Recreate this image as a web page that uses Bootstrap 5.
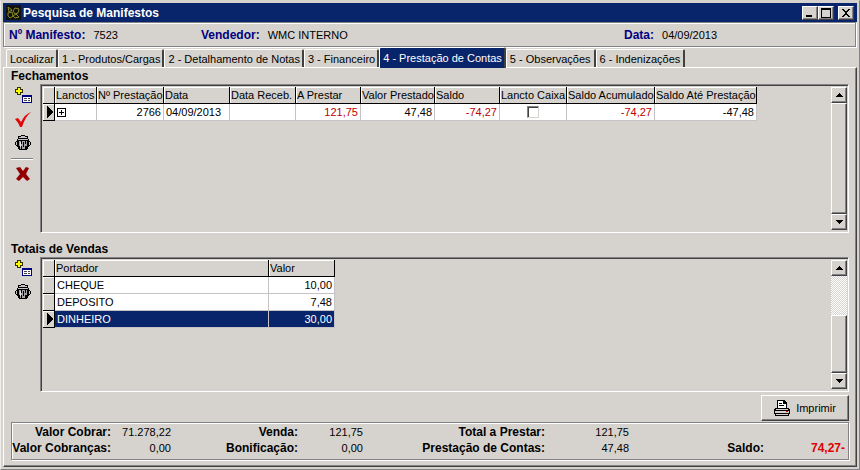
<!DOCTYPE html>
<html lang="pt-BR">
<head>
<meta charset="utf-8">
<meta name="viewport" content="width=device-width, initial-scale=1">
<title>Pesquisa de Manifestos</title>
<link href="https://cdn.jsdelivr.net/npm/bootstrap@5.3.0/dist/css/bootstrap.min.css" rel="stylesheet">
<style>
:root{--face:#d6d3ce;--navy:#08246b;--shade:#848284;--dark:#424142}
body{background:var(--face);color:#000;font:11px/16px "Liberation Sans",Arial,sans-serif}
b,h1,h2{font:bold 12px/16px "Liberation Sans",Arial,sans-serif;margin:0}
button{font:inherit;color:inherit;background:var(--face);border:0;padding:0}
svg{display:block;shape-rendering:crispEdges}
svg.smooth{shape-rendering:auto}
.window-frame{min-height:100vh;padding:2px;border:1px solid;border-color:var(--face) var(--shade) var(--shade) #efeeec}
.caption-bar{background:var(--navy);color:#fff;height:19px;padding:0 3px}
.caption-bar h1{padding-left:2px}
.sys-btn{width:16px;height:14px;color:#000;display:grid;place-items:center}
.groove{border:1px solid var(--shade);box-shadow:inset 1px 1px #fff,1px 1px #fff}
.info-line{display:grid;grid-template-columns:192px 423px 1fr;height:25px;margin-right:1px;padding-left:5px;align-items:center}
.info-line b{margin-right:8px;color:#000080}
.tab-strip{padding:2px 0 0 3px;height:20px}
.tab-btn{border-left:1px solid #fff;border-top:1px solid #fff;border-right:2px solid var(--dark);border-radius:2px 2px 0 0;height:18px;line-height:18px;padding:0 2px 0 3px;white-space:nowrap}
.tab-btn.active{background:var(--navy);color:#fff;height:21px;margin-top:-2px;z-index:1;position:relative}
.tab-btn.active~.tab-btn{padding-right:3px}
.tab-page{border:1px solid;border-color:#fff var(--dark) var(--dark) #fff;box-shadow:inset -1px -1px var(--shade);padding:0 7px 6px 7px}
.tool-col{width:29px;flex:none;padding:2px 5px 0 0}
.tool-col button{display:block;width:18px;height:18px;margin:0 0 6px 3px}
.tool-col hr{margin:0 0 5px;width:22px;height:2px;border:0;opacity:1;background:linear-gradient(var(--shade) 50%,#fff 50%)}
.sunken{border:1px solid;border-color:var(--shade) #fff #fff var(--shade);box-shadow:inset 1px 1px var(--dark);padding:2px 1px 2px 2px}
.pane-a{height:149px}.pane-b{height:135px}
.grid-table{table-layout:fixed;border-collapse:separate;border-spacing:0;width:0}
.grid-table th,.grid-table td{height:17px;line-height:16px;padding:0 2px;white-space:nowrap;font-weight:400}
.grid-table th{background:var(--face);padding:0 1px;border-right:1px solid #000;border-bottom:1px solid #000;box-shadow:inset 1px 1px #fff}
.grid-table td{background:#fff;border-right:1px solid #c6c3c6;border-bottom:1px solid #c6c3c6}
.grid-table td:first-child{background:var(--face);border-color:#000;padding:0;box-shadow:inset 1px 1px #fff}
.grid-table .picked td:not(:first-child){background:var(--navy);color:#fff}
.neg{color:#c00000}
.tick{appearance:none;width:12px;height:12px;margin:0;display:block;background:#fff;border:1px solid;border-color:var(--shade) #d6d3ce #d6d3ce var(--shade);box-shadow:inset 1px 1px var(--dark)}
.scroll-bar{width:16px;flex:none;background:repeating-conic-gradient(#fff 0 25%,var(--face) 0 50%) 0 0/2px 2px}
.scroll-thumb{height:58px}
.raised{background:var(--face);border:1px solid;border-color:#fff var(--dark) var(--dark) #fff;box-shadow:inset -1px -1px var(--shade)}
.scroll-bar button{width:16px;height:16px;display:grid;place-items:center}
.action-row{padding-top:3px}
.print-btn{width:88px;height:26px;gap:6px}
.sum-grid{display:grid;grid-template-columns:99px 60px 127px 65px 182px 84px 1fr 81px;text-align:right;white-space:nowrap;padding:1px 3px 3px 0;margin-top:1px}
.total{color:#e00000}
</style>
<script src="https://cdn.jsdelivr.net/npm/bootstrap@5.3.0/dist/js/bootstrap.bundle.min.js"></script>
</head>
<body>
<svg width="0" height="0" class="position-absolute" aria-hidden="true">
<symbol id="ic-new" viewBox="0 0 18 18"><path fill="#31310a" d="M3 1h4v2h2v4H7v2H3V7H1V3h2z"/><path fill="#ff0" d="M4 2h2v2h2v2H6v2H4V6H2V4h2z"/><path fill="#000080" d="M8 9h10v8H8z"/><path fill="#fff" d="M9 11h8v5H9z"/><path fill="#444" d="M10 12h3v1h-3zM14 12h2v1h-2zM10 14h3v1h-3zM14 14h2v1h-2z"/></symbol>
<symbol id="ic-bin" viewBox="0 0 18 18"><path d="M7 1h4v1h3v3h1v2h1v1h1v3h-1v1h-1v1h-1v2h-1v1H5v-1H4v-2H3v-1H2v-1H1V8h1V7h1V5h1V2h3z"/><path fill="#c6c3c6" d="M7 2h4v1H7zM5 3h8v1H5zM4 5h10v1H4zM2 8h1v3H2zM15 8h1v3h-1z"/><path fill="#a5a2a5" d="M5 7h8v5h-1v3H6v-3H5z"/><path fill="#e6e4e0" d="M6 8h1v5H6z"/><path d="M7 7h1v3H7zM7 12h1v3H7zM9 8h1v5H9zM11 7h1v3h-1zM11 12h1v3h-1z"/></symbol>
</svg>
<main class="window-frame d-flex flex-column">
<header class="caption-bar d-flex align-items-center">
<svg class="smooth" width="15" height="15" viewBox="0 0 15 15"><path fill="#111" d="M0 0h15v15H0z"/><g fill="none" stroke="#8a8c20"><path d="M2 2l4 3-3 2zM7 6l2-3 4 1-1 4-3 1zM2 8l4-1 1 4-3 2-2-2z"/><path d="M7 11l3-2 3 3-4 1z"/></g></svg>
<h1 class="flex-grow-1">Pesquisa de Manifestos</h1>
<button class="sys-btn raised" aria-label="Minimizar"><svg width="10" height="10"><path d="M1 7h6v2H1z"/></svg></button>
<button class="sys-btn raised me-1" aria-label="Maximizar"><svg width="10" height="10"><path d="M0 0h10v10H0zM1 2v7h8V2z" fill-rule="evenodd"/></svg></button>
<button class="sys-btn raised" aria-label="Fechar"><svg width="10" height="10"><path d="M1 1h2v1h1v1h2V2h1V1h2v1H8v1H7v1H6v2h1v1h1v1h1v1H7V8H6V7H4v1H3v1H1V8h1V7h1V6h1V4H3V3H2V2H1z"/></svg></button>
</header>
<section class="info-line groove">
<div><b>Nº Manifesto:</b>7523</div><div><b>Vendedor:</b>WMC INTERNO</div><div><b>Data:</b>04/09/2013</div>
</section>
<nav class="tab-strip d-flex" role="tablist">
<button class="tab-btn" role="tab">Localizar</button><button class="tab-btn" role="tab">1 - Produtos/Cargas</button><button class="tab-btn" role="tab">2 - Detalhamento de Notas</button><button class="tab-btn" role="tab">3 - Financeiro</button><button class="tab-btn active" role="tab" aria-selected="true">4 - Prestação de Contas</button><button class="tab-btn" role="tab">5 - Observações</button><button class="tab-btn" role="tab">6 - Indenizações</button>
</nav>
<section class="tab-page flex-grow-1">
<h2>Fechamentos</h2>
<div class="d-flex">
<div class="tool-col">
<button aria-label="Incluir"><svg width="18" height="18"><use href="#ic-new"/></svg></button>
<button aria-label="Confirmar"><svg class="smooth" width="18" height="18" viewBox="0 0 18 18"><path fill="#e00808" d="M1 9l3-1 3 4q4-8 10-10-6 5-9 15H6Q4 12 1 9z"/></svg></button>
<button aria-label="Excluir"><svg width="18" height="18"><use href="#ic-bin"/></svg></button>
<hr>
<button aria-label="Cancelar"><svg class="smooth" width="18" height="18" viewBox="0 0 18 18"><path fill="#940000" d="M2 3l4-1 3 4 3-4 3 1-3 6 4 5-3 2-4-4-4 4-3-2 4-5z"/></svg></button>
</div>
<div class="sunken pane-a flex-grow-1 d-flex justify-content-between">
<table class="grid-table align-self-start">
<colgroup><col style="width:12px"><col style="width:42px"><col style="width:67px"><col style="width:66px"><col style="width:66px"><col style="width:65px"><col style="width:74px"><col style="width:65px"><col style="width:67px"><col style="width:88px"><col style="width:102px"></colgroup>
<thead><tr><th></th><th>Lanctos</th><th>Nº Prestação</th><th>Data</th><th>Data Receb.</th><th>A Prestar</th><th>Valor Prestado</th><th>Saldo</th><th>Lancto Caixa</th><th>Saldo Acumulado</th><th>Saldo Até Prestação</th></tr></thead>
<tbody><tr><td><svg class="ms-1" width="7" height="12"><path d="M0 0h1v1h1v1h1v1h1v1h1v1h1v2H5v1H4v1H3v1H2v1H1v1H0z"/></svg></td><td><button class="d-block bg-white" aria-label="Expandir"><svg width="9" height="9"><path fill-rule="evenodd" d="M0 0h9v9H0zM1 1v7h7V1zM4 2h1v2h2v1H5v2H4V5H2V4h2z"/></svg></button></td><td class="text-end">2766</td><td>04/09/2013</td><td></td><td class="text-end neg">121,75</td><td class="text-end">47,48</td><td class="text-end neg">-74,27</td><td><input class="tick mx-auto" type="checkbox" aria-label="Lancto Caixa"></td><td class="text-end neg">-74,27</td><td class="text-end">-47,48</td></tr></tbody>
</table>
<div class="scroll-bar d-flex flex-column"><button class="raised" aria-label="Subir"><svg width="7" height="4"><path d="M3 0h1v1h1v1h1v1h1v1H0V3h1V2h1V1h1z"/></svg></button><div class="raised flex-grow-1"></div><button class="raised" aria-label="Descer"><svg width="7" height="4"><path d="M0 0h7v1H6v1H5v1H4v1H3V3H2V2H1V1H0z"/></svg></button></div>
</div>
</div>
<h2 class="mt-2">Totais de Vendas</h2>
<div class="d-flex">
<div class="tool-col">
<button aria-label="Incluir"><svg width="18" height="18"><use href="#ic-new"/></svg></button>
<button aria-label="Excluir"><svg width="18" height="18"><use href="#ic-bin"/></svg></button>
</div>
<div class="sunken pane-b flex-grow-1 d-flex justify-content-between">
<table class="grid-table align-self-start">
<colgroup><col style="width:12px"><col style="width:214px"><col style="width:66px"></colgroup>
<thead><tr><th></th><th>Portador</th><th>Valor</th></tr></thead>
<tbody><tr><td></td><td>CHEQUE</td><td class="text-end">10,00</td></tr><tr><td></td><td>DEPOSITO</td><td class="text-end">7,48</td></tr>
<tr class="picked"><td><svg class="ms-1" width="7" height="12"><path d="M0 0h1v1h1v1h1v1h1v1h1v1h1v2H5v1H4v1H3v1H2v1H1v1H0z"/></svg></td><td>DINHEIRO</td><td class="text-end">30,00</td></tr></tbody>
</table>
<div class="scroll-bar d-flex flex-column"><button class="raised" aria-label="Subir"><svg width="7" height="4"><path d="M3 0h1v1h1v1h1v1h1v1H0V3h1V2h1V1h1z"/></svg></button><div class="raised scroll-thumb mt-auto"></div><button class="raised" aria-label="Descer"><svg width="7" height="4"><path d="M0 0h7v1H6v1H5v1H4v1H3V3H2V2H1V1H0z"/></svg></button></div>
</div>
</div>
<div class="action-row d-flex justify-content-end"><button class="print-btn raised d-flex align-items-center justify-content-center"><svg width="16" height="16" viewBox="0 0 16 16"><path d="M3 0h7l3 3v5h2v1h1v5h-1v2H1v-2H0V9h1V8h2z"/><path fill="#fff" d="M4 1h5v3h3v4H4z"/><path fill="#d6d3ce" d="M2 9h12v1H2zM1 11h14v2H1zM2 14h12v1H2z"/><path d="M5 3h3v1H5zM5 5h5v1H5z"/><path fill="#e00" d="M12 11h2v1h-2z"/></svg>Imprimir</button></div>
<div class="sum-grid groove">
<b>Valor Cobrar:</b><span>71.278,22</span><b>Venda:</b><span>121,75</span><b>Total a Prestar:</b><span>121,75</span><b></b><span></span>
<b>Valor Cobranças:</b><span>0,00</span><b>Bonificação:</b><span>0,00</span><b>Prestação de Contas:</b><span>47,48</span><b>Saldo:</b><b class="total">74,27-</b>
</div>
</section>
</main>
</body>
</html>
